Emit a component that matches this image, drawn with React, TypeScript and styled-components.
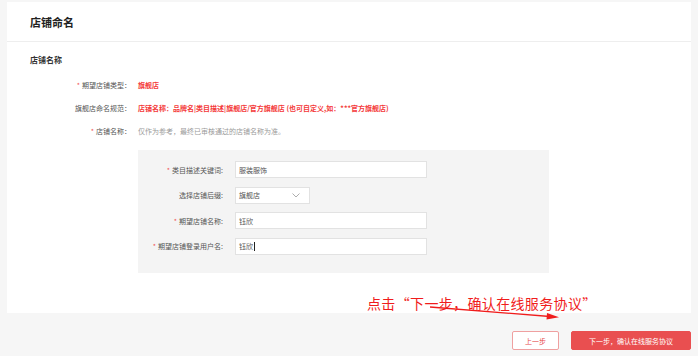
import React, { FC } from 'react';
import styled, { createGlobalStyle } from 'styled-components';

const GlobalStyle = createGlobalStyle`
  html, body {
    margin: 0;
    padding: 0;
    background: #f6f6f6;
    font-family: "Noto Sans CJK SC", "Noto Sans", "Liberation Sans", sans-serif;
  }
`;

interface IInfoRow {
  label: string;
  value: string;
  required?: boolean;
  tone: 'red' | 'muted';
}

interface IFormRow {
  label: string;
  value: string;
  required?: boolean;
  narrow?: boolean;
  select?: boolean;
  caret?: boolean;
}

const infoRows: IInfoRow[] = [
  { label: '期望店铺类型：', value: '旗舰店', required: true, tone: 'red' },
  {
    label: '旗舰店命名规范：',
    value: '店铺名称：品牌名|类目描述|旗舰店/官方旗舰店 (也可自定义,如：***官方旗舰店)',
    tone: 'red',
  },
  {
    label: '店铺名称：',
    value: '仅作为参考，最终已审核通过的店铺名称为准。',
    required: true,
    tone: 'muted',
  },
];

const formRows: IFormRow[] = [
  { label: '类目描述关键词:', value: '服装服饰', required: true },
  { label: '选择店铺后缀:', value: '旗舰店', narrow: true, select: true },
  { label: '期望店铺名称:', value: '钰欣', required: true },
  { label: '期望店铺登录用户名:', value: '钰欣', required: true, caret: true },
];

const Page = styled.div`
  position: relative;
  width: 698px;
  height: 356px;
  padding-top: 2px;
  box-sizing: border-box;
  overflow: hidden;
`;

const Card = styled.section`
  margin: 0 7px;
  height: 311px;
  background: #fff;
`;

const CardHeader = styled.header`
  height: 39px;
  display: flex;
  align-items: center;
  padding-left: 23px;
  border-bottom: 1px solid #eeeeee;
  font-size: 11px;
  font-weight: 700;
  color: #222;
`;

const CardBody = styled.div`
  padding: 10px 23px 0;
`;

const SubTitle = styled.h3`
  margin: 0;
  height: 16px;
  line-height: 16px;
  font-size: 8px;
  font-weight: 700;
  color: #333;
`;

const InfoList = styled.div`
  margin-top: 5px;
`;

const InfoRowLine = styled.div`
  display: flex;
  align-items: center;
  height: 23px;
  font-size: 7px;
`;

const InfoLabel = styled.span`
  width: 101px;
  text-align: right;
  color: #555;
  flex-shrink: 0;
`;

const Star = styled.i`
  font-style: normal;
  color: #f25555;
  margin-right: 2px;
`;

const InfoValue = styled.span<{ $tone: 'red' | 'muted' }>`
  margin-left: 7px;
  white-space: pre;
  color: ${p => (p.$tone === 'red' ? '#f43a3a' : '#9a9a9a')};
  font-weight: ${p => (p.$tone === 'red' ? 700 : 400)};
`;

const Panel = styled.div`
  margin: 8px 0 0 108px;
  width: 411px;
  height: 123px;
  box-sizing: border-box;
  padding-top: 11px;
  background: #f4f4f4;
  display: flex;
  flex-direction: column;
  gap: 8.5px;
`;

const FormRowLine = styled.div`
  display: flex;
  align-items: center;
  height: 17px;
  font-size: 7px;
`;

const FormLabel = styled.span`
  width: 85px;
  text-align: right;
  color: #555;
  flex-shrink: 0;
`;

const Field = styled.div<{ $narrow?: boolean }>`
  margin-left: 12px;
  width: ${p => (p.$narrow ? '75px' : '192px')};
  height: 17px;
  box-sizing: border-box;
  border: 1px solid #e2e2e2;
  background: #fff;
  display: flex;
  align-items: center;
  justify-content: space-between;
  padding: 0 9px 0 3px;
  color: #555;
`;

const Caret = styled.span`
  display: inline-block;
  width: 1px;
  height: 9px;
  background: #222;
  vertical-align: middle;
  margin-left: 1px;
`;

const Footer = styled.div`
  display: flex;
  justify-content: flex-end;
  gap: 12px;
  margin: 18px 7px 0;
`;

const Button = styled.button<{ $primary?: boolean }>`
  height: 19px;
  padding: 0;
  font-family: inherit;
  font-size: 7px;
  border-radius: 2px;
  cursor: pointer;
  border: 1px solid ${p => (p.$primary ? '#e94f50' : '#efa0a0')};
  background: ${p => (p.$primary ? '#e94f50' : '#fff')};
  color: ${p => (p.$primary ? '#fff' : '#e64848')};
  width: ${p => (p.$primary ? '120px' : '47px')};
`;

const Annotation = styled.div`
  position: absolute;
  left: 367px;
  top: 294px;
  font-size: 14px;
  line-height: 18px;
  color: #f01c1c;
  white-space: nowrap;
  letter-spacing: 0.35px;
`;

const ArrowSvg = styled.svg`
  position: absolute;
  left: 420px;
  top: 300px;
`;

const Chevron: FC = () => (
  <svg width="8" height="5" viewBox="0 0 8 5">
    <polyline points="0.5,0.5 4,4 7.5,0.5" fill="none" stroke="#999" strokeWidth="0.8" />
  </svg>
);

export default function App() {
  return (
    <Page>
      <GlobalStyle />
      <Card>
        <CardHeader>店铺命名</CardHeader>
        <CardBody>
          <SubTitle>店铺名称</SubTitle>
          <InfoList>
            {infoRows.map(row => (
              <InfoRowLine key={row.label}>
                <InfoLabel>
                  {row.required && <Star>*</Star>}
                  {row.label}
                </InfoLabel>
                <InfoValue $tone={row.tone}>{row.value}</InfoValue>
              </InfoRowLine>
            ))}
          </InfoList>
          <Panel>
            {formRows.map(row => (
              <FormRowLine key={row.label}>
                <FormLabel>
                  {row.required && <Star>*</Star>}
                  {row.label}
                </FormLabel>
                <Field $narrow={row.narrow}>
                  <span>
                    {row.value}
                    {row.caret && <Caret />}
                  </span>
                  {row.select && <Chevron />}
                </Field>
              </FormRowLine>
            ))}
          </Panel>
        </CardBody>
      </Card>
      <Footer>
        <Button>上一步</Button>
        <Button $primary>下一步，确认在线服务协议</Button>
      </Footer>
      <Annotation>点击“下一步，确认在线服务协议”</Annotation>
      <ArrowSvg width="150" height="24" viewBox="0 0 150 24">
        <line x1="10" y1="7" x2="130" y2="16.5" stroke="#f01c1c" strokeWidth="1.3" />
        <polygon points="139,17.2 127,13 126.5,19.5" fill="#f01c1c" />
      </ArrowSvg>
    </Page>
  );
}
